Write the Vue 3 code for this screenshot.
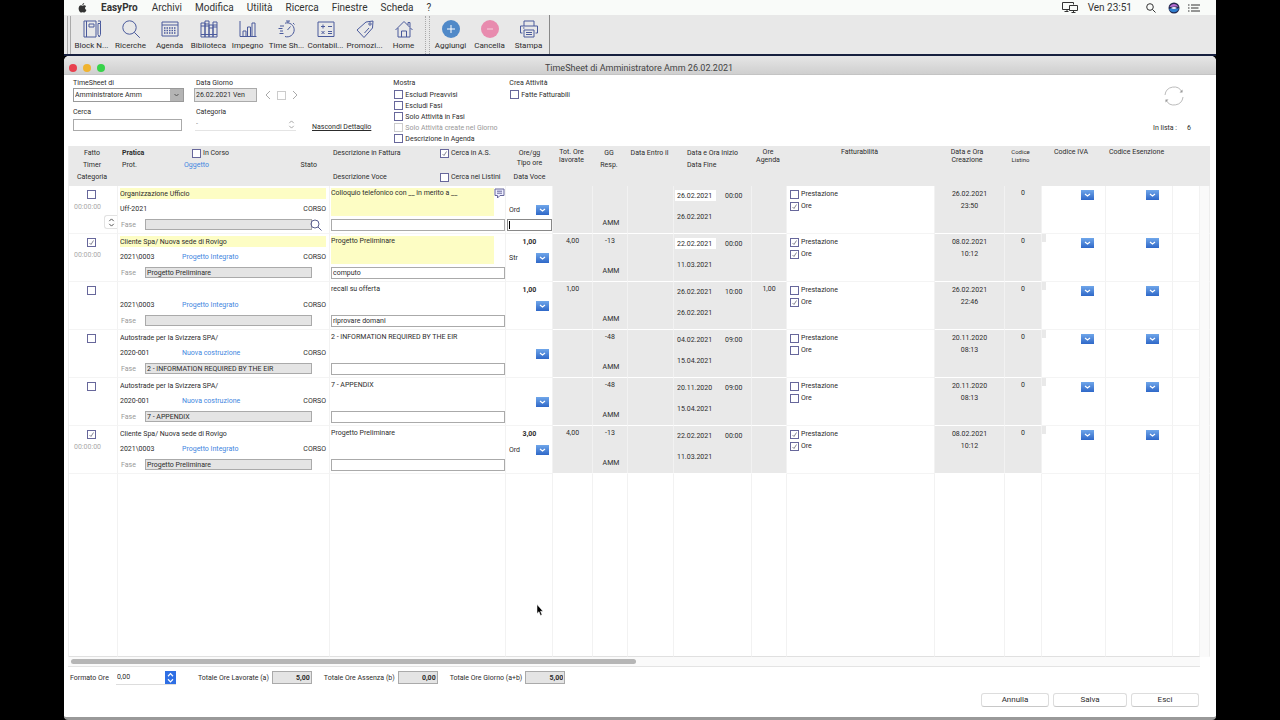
<script setup>
import { ref } from 'vue'

const menus = ['Archivi', 'Modifica', 'Utilità', 'Ricerca', 'Finestre', 'Scheda', '?']

const tools = [
  { id: 'notes', label: 'Block N...' },
  { id: 'search', label: 'Ricerche' },
  { id: 'agenda', label: 'Agenda' },
  { id: 'books', label: 'Biblioteca' },
  { id: 'chart', label: 'Impegno' },
  { id: 'timer', label: 'Time Sh...' },
  { id: 'calc', label: 'Contabil...' },
  { id: 'tag', label: 'Promozi...' },
  { id: 'home', label: 'Home' },
]
const actions = [
  { id: 'add', label: 'Aggiungi' },
  { id: 'remove', label: 'Cancella' },
  { id: 'print', label: 'Stampa' },
]

const filters = ref([
  { label: 'Escludi Preavvisi', on: false },
  { label: 'Escludi Fasi', on: false },
  { label: 'Solo Attività in Fasi', on: false },
  { label: 'Solo Attività create nel Giorno', on: false, disabled: true },
  { label: 'Descrizione in Agenda', on: false },
])

const rows = ref([
  { done: false, timer: '00:00:00', client: 'Organizzazione Ufficio', prot: 'Uff-2021', subject: '', phase: '', desc: 'Colloquio telefonico con __ in merito a __', voice: '', hours: '', type: 'Ord', total: '', days: '', start: '26.02.2021', time: '00:00', end: '26.02.2021', agenda: '', service: false, hourly: true, created: '26.02.2021', at: '23:50', marked: true, active: true },
  { done: true, timer: '00:00:00', client: 'Cliente Spa/ Nuova sede di Rovigo', prot: '2021\\0003', subject: 'Progetto Integrato', phase: 'Progetto Preliminare', desc: 'Progetto Preliminare', voice: 'computo', hours: '1,00', type: 'Str', total: '4,00', days: '-13', start: '22.02.2021', time: '00:00', end: '11.03.2021', agenda: '', service: true, hourly: true, created: '08.02.2021', at: '10:12', marked: true },
  { done: false, timer: '', client: '', prot: '2021\\0003', subject: 'Progetto Integrato', phase: '', desc: 'recall su offerta', voice: 'riprovare domani', hours: '1,00', type: '', total: '1,00', days: '', start: '26.02.2021', time: '10:00', end: '26.02.2021', agenda: '1,00', service: false, hourly: true, created: '26.02.2021', at: '22:46' },
  { done: false, timer: '', client: 'Autostrade per la Svizzera SPA/', prot: '2020-001', subject: 'Nuova costruzione', phase: '2 - INFORMATION REQUIRED BY THE EIR', desc: '2 - INFORMATION REQUIRED BY THE EIR', voice: '', hours: '', type: '', total: '', days: '-48', start: '04.02.2021', time: '09:00', end: '15.04.2021', agenda: '', service: false, hourly: false, created: '20.11.2020', at: '08:13' },
  { done: false, timer: '', client: 'Autostrade per la Svizzera SPA/', prot: '2020-001', subject: 'Nuova costruzione', phase: '7 - APPENDIX', desc: '7 - APPENDIX', voice: '', hours: '', type: '', total: '', days: '-48', start: '20.11.2020', time: '09:00', end: '15.04.2021', agenda: '', service: false, hourly: false, created: '20.11.2020', at: '08:13' },
  { done: true, timer: '00:00:00', client: 'Cliente Spa/ Nuova sede di Rovigo', prot: '2021\\0003', subject: 'Progetto Integrato', phase: 'Progetto Preliminare', desc: 'Progetto Preliminare', voice: '', hours: '3,00', type: 'Ord', total: '4,00', days: '-13', start: '22.02.2021', time: '00:00', end: '11.03.2021', agenda: '', service: true, hourly: true, created: '08.02.2021', at: '10:12' },
])

const totals = [
  { id: 'tot-a', label: 'Totale Ore Lavorate (a)', value: '5,00' },
  { id: 'tot-b', label: 'Totale Ore Assenza (b)', value: '0,00' },
  { id: 'tot-ab', label: 'Totale Ore Giorno (a+b)', value: '5,00' },
]
const dataColumns = 15
</script>

<template>
  <div class="screen">
    <header class="menubar">
      <svg class="apple" viewBox="0 0 16 18" aria-hidden="true"><path d="M11 0c.1 2-1.6 3.700-3.400 3.600C7.400 1.800 9.200.2 11 0zM8 4.900c.8 0 1.800-1 3.300-.9 1.300.1 2.400.7 3.100 1.700-2.800 1.800-2.300 5.700.6 6.900-.8 2.200-2.200 4.700-3.800 4.700-1.200 0-1.600-.8-3-.8s-1.900.8-3 .8C3.400 17.300 1 13.400 1 9.800 1 6.200 3.300 4 5.300 4 6.500 4 7.300 4.900 8 4.900z" /></svg>
      <nav class="menus">
        <a href="#" class="app">EasyPro</a>
        <a v-for="m in menus" :key="m" href="#">{{ m }}</a>
      </nav>
      <div class="status">
        <svg class="displays" viewBox="0 0 16 11"><path d="M7 7.500H.5v-7h11v2M2.500 9.500h4M5 7.500v2" /><path d="M7.500 3.500h8v5h-8zM11.500 8.500v2M9.500 10.500h4" /></svg>
        <span class="clock">Ven 23:51</span>
        <svg class="lens" viewBox="0 0 10 10"><circle cx="4" cy="4" r="3.300" /><path d="M6.500 6.500l3 3" /></svg>
        <svg class="siri" viewBox="0 0 12 12"><circle cx="6" cy="6" r="5.500" fill="#25294f" /><path d="M1.500 5c2-4 7-4 9 0-3-1-6 0-9 0z" fill="#b56bd0" /><path d="M1 7c3-2 7 1 10-1-1 5-8 6-10 1z" fill="#2f7fd0" /><path d="M3 6q3-2 6 0-3 2-6 0" fill="#eef" /></svg>
        <svg class="list" viewBox="0 0 12 8"><path d="M3 1h9M3 4h7.500M3 7h9M0 1h1.500M0 4h1.500M0 7h1.500" /></svg>
      </div>
    </header>

    <div class="toolbar">
      <span class="grip"></span>
      <button v-for="t in tools" :key="t.id" type="button" class="tool">
        <svg class="ico" viewBox="0 0 20 20" aria-hidden="true">
          <g v-if="t.id === 'notes'"><path d="M2 2h12v16H2zM4.500 2v16M7 5h5v3H7zM16 4.500h2.500v11L17.200 18 16 15.500zM16 2h2.500v2.500" /></g>
          <g v-else-if="t.id === 'search'"><circle cx="8.500" cy="8.500" r="6.700" /><path d="M13.300 13.300l5.500 5.500" /></g>
          <g v-else-if="t.id === 'agenda'"><path d="M2 3h16v14H2zM2 6h16" /><path class="dots" d="M4 9h12M4 11.500h12M4 14h12" /></g>
          <g v-else-if="t.id === 'books'"><path d="M2 4h4v14H2zM6 2h4v16H6zM10 6h4v12h-4zM14 3h4v15h-4zM2 7h4M6 5h4M6 7h4M10 9h4M14 6h4M14 8h4M2 15.500h16" /></g>
          <g v-else-if="t.id === 'chart'"><path d="M2 2v15.500h16.500M5 17v-5h3v5M9.500 17V8h3v9M14 17V4h3v13" /></g>
          <g v-else-if="t.id === 'timer'"><path d="M8 4.200a7 7 0 1 1 0 13.300M9 2h4M11 2v2M16 4l1.500 1.500M10.500 11l3-3.500M3 7h4M1.500 9.500h4M3 12h3M2.500 14.500h4" /></g>
          <g v-else-if="t.id === 'calc'"><path d="M2 3h16v14.500H2zM5 7.500h4M7 5.500v4M12 7.500h4M5.500 12l3 3M8.500 12l-3 3M12 12.500h4M12 14.500h4" /></g>
          <g v-else-if="t.id === 'tag'"><path d="M2 11L11 3l7-1-.5 7L9 18.500zM14 9l-4.500 5" /><circle cx="15" cy="5" r="1.200" /></g>
          <g v-else><path d="M1.500 11L10 2.500l8.500 8.500M4 9v9h12V9M14 6V3.500h2V8M7.500 18v-6h5v6" /></g>
        </svg>
        <span>{{ t.label }}</span>
      </button>
      <span class="divider"></span>
      <button v-for="t in actions" :key="t.id" type="button" class="tool">
        <svg class="ico" viewBox="0 0 20 20" aria-hidden="true">
          <g v-if="t.id === 'add'"><circle cx="10" cy="10" r="9" class="blue" /><path class="white" d="M10 6v8M6 10h8" /></g>
          <g v-else-if="t.id === 'remove'"><circle cx="10" cy="10" r="9" class="pink" /><path class="soft" d="M7 10h6" /></g>
          <g v-else><path d="M5 7V2h10v5M3.500 14H1.500V7h17v7h-2M5 11h10v7H5zM4 9h1.500M7 13.500h6M7 15.500h6" /></g>
        </svg>
        <span>{{ t.label }}</span>
      </button>
      <span class="bar-end"></span>
    </div>

    <main class="window">
      <div class="titlebar">
        <span class="light red"></span><span class="light amber"></span><span class="light green"></span>
        <h1>TimeSheet di Amministratore Amm 26.02.2021</h1>
      </div>

      <section class="filters">
        <div class="group user">
          <label for="owner">TimeSheet di</label>
          <select id="owner" class="combo"><option>Amministratore Amm</option></select>
          <label for="find">Cerca</label>
          <input id="find" class="box" type="text" />
        </div>
        <div class="group day">
          <label for="date">Data Giorno</label>
          <div class="dayrow">
            <input id="date" class="box shaded" type="text" value="26.02.2021 Ven" />
            <button type="button" aria-label="Giorno precedente"><svg viewBox="0 0 6 10"><path d="M5 1L1 5l4 4" /></svg></button>
            <button type="button" class="today" aria-label="Oggi"></button>
            <button type="button" aria-label="Giorno successivo"><svg viewBox="0 0 6 10"><path d="M1 1l4 4-4 4" /></svg></button>
          </div>
          <label for="cat">Categoria</label>
          <select id="cat" class="pop"><option>-</option></select>
        </div>
        <a href="#" class="hide">Nascondi Dettaglio</a>
        <fieldset class="checks">
          <legend>Mostra</legend>
          <label v-for="f in filters" :key="f.label" :class="{ off: f.disabled }"><input v-model="f.on" type="checkbox" :disabled="f.disabled" />{{ f.label }}</label>
        </fieldset>
        <fieldset class="checks create">
          <legend>Crea Attività</legend>
          <label><input type="checkbox" />Fatte Fatturabili</label>
        </fieldset>
        <div class="summary">
          <button type="button" aria-label="Aggiorna"><svg viewBox="0 0 20 20"><path d="M1 9a9 9 0 0 1 17-3M19 11a9 9 0 0 1-17 3" /><path class="tip" d="M18.500 3.500v3H15.500zM1.500 16.500v-3H4.500z" /></svg></button>
          <p><span>In lista :</span><span>6</span></p>
        </div>
      </section>

      <section class="sheet">
        <table>
          <colgroup>
            <col class="c50" /><col class="c212" /><col class="c176" /><col class="c47" /><col class="c40" /><col class="c35" /><col class="c46" /><col class="c78" /><col class="c35" /><col /><col class="c70" /><col class="c37" /><col class="c64" /><col class="c67" /><col class="c27" /><col class="c10" />
          </colgroup>
          <thead>
            <tr>
              <th class="mid back"><div class="lines"><span>Fatto</span><span>Timer</span><span>Categoria</span></div></th>
              <th>
                <div class="lines">
                  <span class="hp"><b>Pratica</b><label class="tick"><input type="checkbox" />In Corso</label></span>
                  <span class="hp"><span>Prot.</span><a href="#">Oggetto</a><span class="state">Stato</span></span>
                </div>
              </th>
              <th>
                <div class="lines">
                  <span class="hd"><span>Descrizione in Fattura</span><label class="tick"><input type="checkbox" checked />Cerca in A.S.</label></span>
                  <span></span>
                  <span class="hd"><span>Descrizione Voce</span><label class="tick"><input type="checkbox" />Cerca nei Listini</label></span>
                </div>
              </th>
              <th class="mid"><div class="lines hours"><span>Ore/gg</span><span>Tipo ore</span><span>Data Voce</span></div></th>
              <th class="mid tight back">Tot. Ore<br />lavorate</th>
              <th class="mid back"><div class="lines"><span>GG</span><span>Resp.</span></div></th>
              <th class="mid back"><div class="lines"><span>Data Entro il</span></div></th>
              <th><div class="lines inset"><span>Data e Ora Inizio</span><span>Data Fine</span></div></th>
              <th class="mid tight back">Ore<br />Agenda</th>
              <th class="mid tight back">Fatturabilità</th>
              <th class="mid tight wide">Data e Ora<br />Creazione</th>
              <th class="mid tight small wide">Codice<br />Listino</th>
              <th class="mid tight wide">Codice IVA</th>
              <th class="mid tight wide">Codice Esenzione</th>
              <th></th>
              <th></th>
            </tr>
          </thead>
          <tbody>
            <tr v-for="(r, i) in rows" :key="i" class="entry" :class="{ marked: r.marked }">
              <td class="mid">
                <div class="donecell">
                  <input v-model="r.done" type="checkbox" aria-label="Fatto" />
                  <span class="timer">{{ r.timer }}</span>
                  <button v-if="r.active" type="button" class="stepper" aria-label="Categoria"><svg viewBox="0 0 7 10"><path d="M1 3.500L3.500 1 6 3.500M1 6.500L3.500 9 6 6.500" /></svg></button>
                </div>
              </td>
              <td>
                <div class="practice">
                  <input v-model="r.client" class="plain" type="text" aria-label="Pratica" />
                  <div class="codes"><span>{{ r.prot }}</span><a href="#">{{ r.subject }}</a><span class="state">CORSO</span></div>
                  <div class="phase">
                    <label :for="'phase' + i">Fase</label>
                    <input :id="'phase' + i" v-model="r.phase" class="box shaded" type="text" />
                    <button v-if="r.active" type="button" aria-label="Cerca fase"><svg viewBox="0 0 12 12"><circle cx="5" cy="5" r="4" /><path d="M8 8l3.500 3.500" /></svg></button>
                  </div>
                </div>
              </td>
              <td>
                <div class="description">
                  <div class="invoice">
                    <textarea v-model="r.desc" aria-label="Descrizione in Fattura"></textarea>
                    <button v-if="r.active" type="button" aria-label="Note"><svg viewBox="0 0 11 11"><path d="M1 1h9v6.500H6L3.500 10V7.500H1zM3 3.200h5M3 5.200h5" /></svg></button>
                  </div>
                  <input v-model="r.voice" class="box" type="text" aria-label="Descrizione Voce" />
                </div>
              </td>
              <td>
                <div class="hourcell">
                  <b>{{ r.hours }}</b>
                  <select class="drop" aria-label="Tipo ore"><option>{{ r.type }}</option></select>
                  <div v-if="r.active" class="box caret"><input type="text" aria-label="Data Voce" /></div>
                </div>
              </td>
              <td class="grey mid"><div class="top">{{ r.total }}</div></td>
              <td class="grey mid"><div class="resp"><span>{{ r.days }}</span><span>AMM</span></div></td>
              <td class="grey"></td>
              <td class="grey">
                <div class="dates">
                  <input v-model="r.start" type="text" aria-label="Data Inizio" /><span>{{ r.time }}</span>
                  <span>{{ r.end }}</span>
                </div>
              </td>
              <td class="grey mid"><div class="top">{{ r.agenda }}</div></td>
              <td>
                <div class="billing">
                  <label class="tick"><input v-model="r.service" type="checkbox" />Prestazione</label>
                  <label class="tick"><input v-model="r.hourly" type="checkbox" />Ore</label>
                </div>
              </td>
              <td class="grey mid"><div class="created"><span>{{ r.created }}</span><span>{{ r.at }}</span></div></td>
              <td class="grey mid"><div class="top">0</div></td>
              <td class="code" :class="{ nub: !r.active }"><select class="drop only" aria-label="Codice IVA"><option></option></select></td>
              <td class="code"><select class="drop only" aria-label="Codice Esenzione"><option></option></select></td>
              <td></td>
              <td class="track"></td>
            </tr>
            <tr class="filler">
              <td v-for="n in dataColumns" :key="n"></td>
              <td class="track"></td>
            </tr>
          </tbody>
        </table>
      </section>
      <div class="hscroll"><span></span></div>

      <footer>
        <div class="totals">
          <label for="fmt">Formato Ore</label>
          <select id="fmt" class="format"><option>0,00</option></select>
          <div v-for="t in totals" :key="t.id" class="total">
            <label :for="t.id">{{ t.label }}</label>
            <input :id="t.id" class="box shaded" type="text" :value="t.value" readonly />
          </div>
        </div>
        <div class="buttons">
          <button type="button">Annulla</button>
          <button type="button" class="save">Salva</button>
          <button type="button">Esci</button>
        </div>
      </footer>
    </main>
    <svg class="pointer" viewBox="0 0 8 12" aria-hidden="true"><path d="M1 .5v9l2-1.800L4.500 11.500l1.500-.7L4.500 7.200H7z" /></svg>
  </div>
</template>

<style>
html, body { margin: 0; background: #000; }
</style>

<style scoped>
* { box-sizing: border-box; }
.screen {
  position: relative;
  height: 100vh;
  min-height: 480px;
  padding: 0 5%;
  display: flex;
  flex-direction: column;
  background: #000;
  color: #2c2c2c;
  font: 7px/10px Roboto, "Noto Sans", sans-serif;
}
button, input, select, textarea {
  font: inherit;
  color: inherit;
  margin: 0;
  padding: 0;
  border: 0;
  border-radius: 0;
  background: none;
  outline: 0;
  appearance: none;
}
svg { display: block; fill: none; }
a { color: inherit; text-decoration: none; }
fieldset { margin: 0; padding: 0; border: 0; }
legend { padding: 0; }

.menubar { flex: none; height: 15px; display: flex; align-items: center; background: #f9fbf9; color: #333; font-size: 10px; }
.apple { width: 9px; height: 10px; margin-left: 14px; fill: #333; }
.menus { display: flex; gap: 13px; margin-left: 14px; }
.app { font-weight: 700; margin-right: 1px; }
.status { margin-left: auto; padding-right: 16px; display: flex; align-items: center; }
.clock { margin-right: 14px; }
.status path, .lens circle { stroke: #333; }
.siri path { stroke: none; }
.displays { width: 16px; height: 11px; margin-right: 10px; }
.lens { width: 10px; height: 10px; margin-right: 12px; }
.siri { width: 12px; height: 12px; margin-right: 8px; }
.list { width: 12px; height: 8px; }

.toolbar { flex: none; height: 41px; display: flex; background: #e8e8e8; border-bottom: 2px solid #17203f; }
.grip { width: 4px; margin: 1px 1px 0 3px; border: solid #aaa; border-width: 0 1px; }
.tool { width: 39px; padding-top: 4px; display: flex; flex-direction: column; align-items: center; gap: 2px; font-size: 8px; white-space: nowrap; }
.ico { width: 20px; height: 20px; stroke: #4a5a9c; stroke-width: 1; }
.dots { stroke-dasharray: 1.500 1; stroke-width: 1.500; }
.blue { fill: #5089c8; stroke: none; }
.pink { fill: #e88bae; stroke: none; }
.white { stroke: #fff; }
.soft { stroke: #f7cfdc; }
.divider { width: 5px; margin: 1px 1px 0 2px; border: dotted #aaa; border-width: 0 1px; }
.bar-end { margin-left: 1px; border-left: 1px solid #888; }

.window { flex: 1; min-height: 0; display: flex; flex-direction: column; background: #fff; border-radius: 5px 5px 4px 4px; border-bottom: 3px solid #999; overflow: hidden; }
.titlebar { flex: none; height: 19px; padding: 5px 5px 0; display: flex; align-items: center; gap: 6px; background: linear-gradient(#e6e6e6, #cfcfcf); border-bottom: 1px solid #c4c4c4; }
.light { width: 8px; height: 8px; border-radius: 50%; }
.red { background: #e8404e; }
.amber { background: #f0b32f; }
.green { background: #37d34a; }
h1 { flex: 1; margin: 0; padding-right: 44px; text-align: center; font-size: 9px; line-height: 12px; font-weight: 400; color: #444; }

.box { height: 12px; border: 1px solid #aaa; background: #fff; padding: 0 1px; }
.shaded { background: #e4e4e4; border-color: #aaa; }
input[type="checkbox"] { flex: none; width: 9px; height: 9px; border: 1px solid #67679b; background: #fff; }
input[type="checkbox"]:checked { background: #fff url("data:image/svg+xml,%3Csvg xmlns='http://www.w3.org/2000/svg' viewBox='0 0 7 7'%3E%3Cpath d='M1.500 4l1.500 1.500L5.500 1.500' fill='none' stroke='%23667' stroke-width='.8'/%3E%3C/svg%3E"); }
input[type="checkbox"]:disabled { border-color: #ccc; }
.tick { display: flex; align-items: center; gap: 2px; }

.filters { flex: none; height: 71px; display: flex; padding: 3px 17px 0 9px; }
.group { display: grid; grid-template-rows: 10px 14px 15px 15px; align-content: start; align-items: center; }
.user { width: 111px; margin-right: 10px; }
.combo { height: 14px; border: 1px solid #999; padding-left: 1px; background: #fff url("data:image/svg+xml,%3Csvg xmlns='http://www.w3.org/2000/svg' viewBox='0 0 13 12'%3E%3Cpath fill='%23b4b4b4' d='M0 0h13v12H0z'/%3E%3Cpath d='M4.500 5l2 2 2-2' fill='none' stroke='%23555'/%3E%3C/svg%3E") right / 13px 12px no-repeat; }
.user .box { width: 109px; }
.group > label:nth-of-type(2) { align-self: end; }
.day { width: 105px; }
.day > label { padding-left: 2px; }
.dayrow { display: flex; align-items: center; gap: 6px; }
.dayrow .box { width: 63px; height: 14px; margin-right: 2px; }
.dayrow svg { width: 6px; height: 10px; stroke: #aaa; }
.today { width: 9px; height: 9px; border: 1px solid #ccc; }
.pop { height: 13px; margin: 0 3px 0 1px; padding-left: 1px; color: #888; border-bottom: 1px solid #e4e4e4; background: url("data:image/svg+xml,%3Csvg xmlns='http://www.w3.org/2000/svg' viewBox='0 0 7 10'%3E%3Cpath d='M1 3.500L3.500 1 6 3.500M1 6.500L3.500 9 6 6.500' fill='none' stroke='%23888' stroke-width='.8'/%3E%3C/svg%3E") right 1px center / 7px 9px no-repeat; }
.hide { margin: 44px 22px 0 13px; align-self: flex-start; text-decoration: underline; white-space: nowrap; }
.checks { width: 116px; }
.checks legend { height: 11px; }
.checks label { display: flex; align-items: center; gap: 2px; height: 11px; margin-left: 1px; white-space: nowrap; }
.off { color: #999; }
.summary { margin-left: auto; display: flex; flex-direction: column; align-items: flex-end; }
.summary svg { width: 20px; height: 20px; margin: 8px 15px 0 0; stroke: #aaa; stroke-width: .8; }
.tip { fill: #999; stroke: none; }
.summary p { display: flex; gap: 10px; margin: 17px 8px 0 0; }

.sheet { flex: 1; min-height: 0; margin: 0 6px 0 4px; border-left: 1px solid #eee; }
table { width: 100%; height: 100%; table-layout: fixed; border-collapse: separate; border-spacing: 0; }
th, td { padding: 0; text-align: left; vertical-align: top; font-weight: 400; }
.mid { text-align: center; }
thead th { height: 40px; background: #e9e9e9; white-space: nowrap; }
thead th.back { padding-right: 3px; }
.c50 { width: 49px; } .c212 { width: 212px; } .c176 { width: 176px; } .c47 { width: 47px; }
.c40 { width: 40px; } .c35 { width: 35px; } .c46 { width: 46px; } .c78 { width: 78px; }
.c70 { width: 70px; } .c37 { width: 37px; } .c64 { width: 64px; } .c67 { width: 67px; }
.c27 { width: 27px; } .c10 { width: 10px; }
.lines { display: grid; grid-template-rows: 12px 12px 12px; align-items: center; padding-top: 1px; }
.hours { grid-template-rows: 11px 10px 17px; justify-content: center; }
.inset { padding-left: 13px; }
thead th.tight { padding-top: 2px; line-height: 8px; }
thead th.wide { padding-right: 6px; }
.small { font-size: 6px; }
.hp { display: grid; grid-template-columns: 62px 1fr auto; padding: 0 13px 0 4px; }
.hp .tick { padding-left: 8px; }
.hp a, .codes a { color: #3f86e0; }
.hd { display: grid; grid-template-columns: 107px 1fr; padding-left: 3px; }

.entry { height: 48px; }
td { border-right: 1px solid #f2f2f2; border-bottom: 1px solid #f4f4f4; }
.grey { background: #e9e9e9; border-bottom-color: #fff; }
.filler td { border-bottom-color: #e0e0e0; }
td.track { background: #fafafa; border-bottom-color: #fafafa; border-right-color: #eee; }
.donecell { height: 47px; padding-top: 4px; display: flex; flex-direction: column; align-items: center; gap: 3px; }
.donecell input { margin-right: 3px; }
.timer { height: 10px; margin-right: 11px; color: #aaa; }
.stepper { align-self: flex-end; width: 13px; height: 14px; padding: 2px 3px; border: 1px solid #e2e2e2; border-right: 0; border-radius: 3px 0 0 3px; }
.stepper svg { width: 7px; height: 9px; stroke: #444; }
.practice { display: grid; grid-template-rows: 15px 15px 17px; align-items: center; padding: 0 3px 0 2px; }
.plain { width: 100%; height: 11px; }
.marked .plain, .marked textarea { background: #fdfdc4; }
.codes { display: grid; grid-template-columns: 62px 1fr auto; }
.phase { display: flex; align-items: center; }
.phase label { width: 25px; color: #999; padding-left: 1px; }
.phase .box { width: 167px; height: 11px; }
.phase button { margin-left: -2px; }
.phase svg { width: 12px; height: 12px; stroke: #5a5f90; }
.description { padding: 2px 0 0 1px; }
.invoice { display: flex; align-items: flex-start; height: 31px; }
textarea { width: 163px; height: 28px; resize: none; overflow: hidden; }
.invoice svg { width: 11px; height: 11px; stroke: #67679b; fill: #eef; }
.description .box { display: block; width: 174px; }
.hourcell { display: grid; grid-template-rows: 15px 18px 12px; align-items: center; padding-left: 1px; }
.hourcell b { text-align: center; }
.hourcell .drop { margin-right: 3px; }
.drop { height: 10px; padding-left: 2px; background: url("data:image/svg+xml,%3Csvg xmlns='http://www.w3.org/2000/svg' viewBox='0 0 13 10'%3E%3Cdefs%3E%3ClinearGradient id='g' x2='0' y2='1'%3E%3Cstop stop-color='%236fa6ea'/%3E%3Cstop offset='1' stop-color='%232f68c8'/%3E%3C/linearGradient%3E%3C/defs%3E%3Cpath fill='url(%23g)' d='M0 0h13v10H0z'/%3E%3Cpath d='M4 4l2.500 2L9 4' fill='none' stroke='%23fff' stroke-width='1.200'/%3E%3C/svg%3E") right / 13px 10px no-repeat; }
.only { display: block; width: 13px; margin: 4px 11px 0 auto; }
.code:nth-child(14) .only { margin-right: 13px; }
.caret { padding: 1px; background: #fff; border-color: #888; }
.caret input { display: block; width: 100%; height: 8px; border-left: 1px solid #000; }
.top { line-height: 15px; }
.resp { display: grid; grid-template-rows: 15px 31px; }
.resp span { line-height: 15px; }
.resp span:last-child { padding: 15px 0 0 2px; }
.dates { display: grid; grid-template-columns: 50px 1fr; grid-template-rows: 19px 24px; align-items: center; padding-left: 1px; }
.dates input { width: 41px; height: 11px; padding-left: 2px; }
.marked .dates input { background: #fff; }
.dates span:last-child { padding-left: 2px; }
.billing { padding: 2px 0 0 3px; }
.billing .tick { height: 12px; }
.created { display: grid; line-height: 12px; padding-top: 2px; }
.nub { background: linear-gradient(#e9e9e9, #e9e9e9) 0 0 / 4px 8px no-repeat; }

.hscroll { flex: none; height: 10px; margin: 0 16px 0 4px; padding: 2px 0 2px 3px; background: #fafafa; border-bottom: 1px solid #e4e4e4; }
.hscroll span { display: block; width: 50%; height: 5px; border-radius: 3px; background: #b6b6b6; }
footer { flex: none; padding: 0 17px 10px 6px; }
.totals { height: 21px; display: flex; align-items: center; }
.format { width: 60px; height: 14px; margin: 0 22px 0 7px; padding-left: 1px; border-bottom: 1px solid #ddd; background: url("data:image/svg+xml,%3Csvg xmlns='http://www.w3.org/2000/svg' viewBox='0 0 11 14'%3E%3Crect width='11' height='14' rx='1' fill='%232f6fe4'/%3E%3Cpath d='M3 5.500L5.500 3 8 5.500M3 8.500L5.500 11 8 8.500' fill='none' stroke='%23fff' stroke-width='1.200'/%3E%3C/svg%3E") right / 11px 14px no-repeat; }
.total { display: flex; align-items: center; gap: 3px; margin-right: 12px; }
.total .box { width: 40px; height: 13px; text-align: right; font-weight: 700; }
.buttons { display: flex; justify-content: flex-end; gap: 4px; margin-top: 5px; }
.buttons button { width: 68px; height: 14px; border: 1px solid #ddd; border-bottom-color: #c8c8c8; border-radius: 3px; font-size: 8px; }
.buttons .save { width: 74px; }
.pointer { position: absolute; left: calc(42% - 2px); top: calc(84% - 1px); width: 8px; height: 12px; fill: #000; stroke: #fff; stroke-width: .5; }
</style>
